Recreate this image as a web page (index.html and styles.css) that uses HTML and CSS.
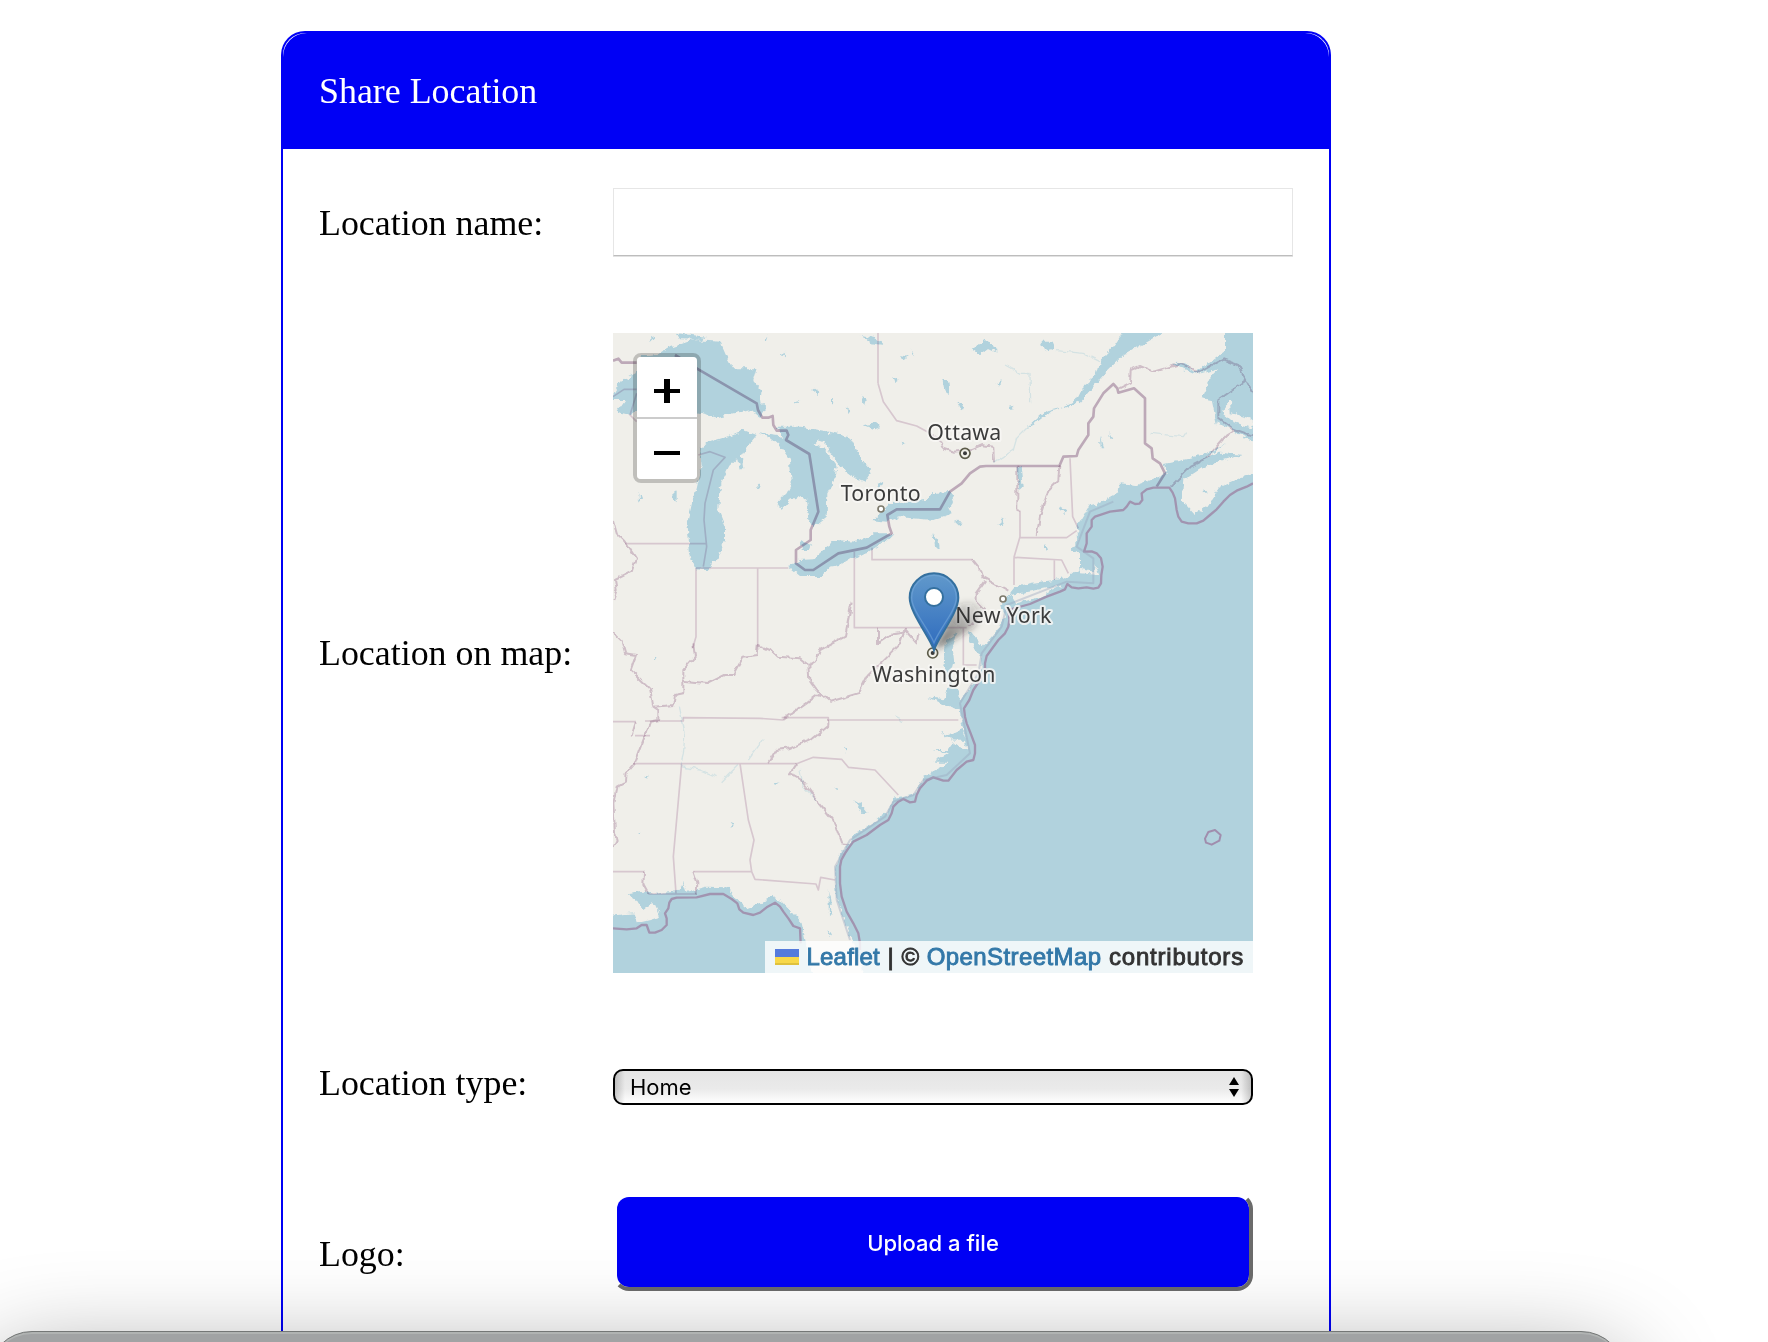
FILE: index.html
```
<!DOCTYPE html>
<html lang="en">
<head>
<meta charset="utf-8">
<title>Share Location</title>
<link rel="stylesheet" href="styles.css">
</head>
<body>
<main class="card">
  <header class="card-header">Share Location</header>
  <form class="fields">
    <label class="label" for="name">Location name:</label>
    <input class="name-input" id="name" type="text">

    <span class="label label-map">Location on map:</span>
    <div class="map">
      <svg class="map-canvas" viewBox="39 39 1920 1920">
        <defs>
          <linearGradient id="pin" x1="0" y1="0" x2="0" y2="1"><stop offset="0" stop-color="#6199cb"/><stop offset="1" stop-color="#2e6bbe"/></linearGradient>
          <linearGradient id="shade" gradientUnits="userSpaceOnUse" x1="1010" y1="985" x2="1150" y2="830"><stop offset="0" stop-color="#222" stop-opacity=".65"/><stop offset="1" stop-color="#222" stop-opacity="0"/></linearGradient>
          <filter id="rough" x="0" y="0" width="1" height="1"><feTurbulence type="fractalNoise" baseFrequency="0.05" numOctaves="3" seed="4"/><feDisplacementMap in="SourceGraphic" scale="20" xChannelSelector="R" yChannelSelector="G"/></filter>
          <filter id="wiggle" x="-.1" y="-.1" width="1.2" height="1.2"><feTurbulence type="fractalNoise" baseFrequency="0.04" numOctaves="2" seed="7"/><feDisplacementMap in="SourceGraphic" scale="16" xChannelSelector="R" yChannelSelector="G"/></filter>
          <filter id="soft" x="-.5" y="-.5" width="2" height="2"><feGaussianBlur stdDeviation="10"/></filter>
        </defs>
        <rect x="0" y="0" width="2000" height="2000" fill="#f0efea"/>
        <g fill="#b1d2dd" filter="url(#rough)">
          <!-- Gulf of St Lawrence and river -->
          <path d="M1980 20H1875V95L1840 120 1790 155 1750 130 1715 128 1790 163 1850 145 1830 180 1805 235 1835 240 1850 310 1890 325 1905 335 1980 375Z"/>
          <path d="M1580 20H1720L1640 65 1570 105 1515 160 1480 200 1440 245 1400 262 1350 275 1300 315 1280 325 1335 275 1390 262 1430 240 1450 200 1490 165 1500 125 1540 80Z"/>
          <!-- Atlantic -->
          <path d="M1875 375L1830 395 1790 412 1692 432 1700 462 1650 480 1610 495 1560 490 1555 520 1500 550 1470 558 1445 600 1430 620 1435 660 1415 690 1440 700 1440 740 1410 765 1380 778 1300 788 1245 800 1225 825 1200 855 1215 890 1195 930 1150 982 1105 930 1105 950 1125 985 1142 1010 1145 1045 1115 1095 1080 1140 1078 1165 1085 1210 1095 1260 1105 1300 1050 1320 1020 1345 970 1370 945 1420 880 1435 860 1480 770 1540 720 1600 705 1660 712 1740 740 1820 765 1880 800 1980H1980V455L1920 475 1860 500 1820 560 1785 585 1745 540 1750 480 1805 445 1850 425 1930 405 1860 398 1820 412 1860 385Z"/>
          <!-- Chesapeake and Carolina sounds -->
          <path d="M1038 960L1072 940 1058 985 1062 1020 1054 1050 1060 1100 1095 1130 1080 1170 1030 1152 985 1132 1030 1138 1048 1100 1030 1040Z"/>
          <path d="M1022 1235L1045 1248 1085 1230 1098 1260 1050 1258 1080 1285 1110 1290 1105 1325 1000 1325 1050 1300 1000 1290 1045 1290 1060 1268Z"/>
          <!-- Gulf of Mexico -->
          <path d="M20 1790L75 1782 135 1778 115 1745 80 1720 130 1712 160 1722 240 1712 252 1685 262 1715 320 1700 380 1702 412 1740 440 1765 480 1750 515 1730 545 1745 605 1810 618 1870 625 1930 650 1980H20Z"/>
          <!-- Lake Superior -->
          <path d="M170 105L205 85 235 75 280 60 360 65 380 110 400 145 470 145 460 180 485 210 480 250 498 265 480 292 455 270 400 280 345 292 290 280 110 270 90 285 50 275 75 240 30 240 60 185 110 160 120 110ZM230 40L320 50 310 60 240 58Z"/>
          <!-- Michigan -->
          <path d="M300 385L330 365 380 350 430 330 470 345 450 370 425 410 430 445 420 455 412 415 385 440 370 470 358 510 355 570 375 620 375 660 350 720 325 748 285 745 270 700 262 610 290 490 305 440Z"/>
          <!-- Huron -->
          <path d="M475 340L550 350 530 320 600 320 710 340 750 350 785 420 815 455 795 485 760 470 720 440 690 400 680 370 650 360 640 370 670 385 710 440 700 490 682 520 680 590 640 622 628 600 620 540 600 525 570 540 545 570 532 550 560 520 575 490 570 420 545 385 510 355Z"/>
          <!-- Erie and Ontario -->
          <path d="M605 660L635 675 630 690 605 690ZM565 740L600 720 640 718 680 680 710 660 765 665 820 640 880 640 860 660 800 700 760 710 720 735 690 740 660 768 600 768Z"/>
          <path d="M815 600L840 580 870 550 980 540 995 520 1050 515 1065 530 1045 560 1055 580 1000 600 900 592 860 605Z"/>
        </g>
        <g fill="#f0efea" filter="url(#rough)">
          <path d="M1865 275L1890 240 1892 280 1950 295 1970 310 1950 322 1900 305Z"/>
          <path d="M1230 825L1300 812 1390 795 1320 830 1250 850ZM1430 745L1480 755 1485 735 1495 765 1440 760Z"/>
          <path d="M1100 1075L1118 1058 1100 1110 1080 1140 1075 1120ZM160 1745L180 1790 150 1800 110 1810 100 1780 130 1770Z"/>
        </g>
        <g fill="#b1d2dd" filter="url(#rough)">
          <path d="M1322 65l35 0 8 20-20 12-18-12zM1115 90l35-30 25 8 15 30-25-12-25 20zM785 45l45 10 20 20-35-5zM1030 180l15 0 5 45-12-8zM1075 250l20 10-12 8zM880 170l16 8-10 8zM640 205l18 12-10 12zM790 315l45-5 5 12-20 6zM1500 350l10 35-8 0zM1250 440l12 0 6 60-10 10zM1380 560l18 12-6 8zM1065 600l25 6-8 10zM220 515l10 0 0 35-8 -8zM115 515l8 20-6 10zM830 485l20 8-15 10zM470 490l12 10-6 8zM1810 508l14 8-12 6zM150 50l10 8-8 8zM1000 640l15 20 5 30-15-15zM785 220l15 20-5 18zM740 262l14 8-8 6z"/>
          <path d="M760 1440l25 15 16 22-18-2zM700 1405l16 4-8 4zM520 1395l15-12-5 15zM390 1508l12 5-6 8zM112 1540l10-6-4 12zM130 1372l20-8-12 12zM685 1710l6 30 4 45-8 10zM682 1830l10 15-6 4zM732 1280l8 6-4 12zM165 1005l6 12-6 2z"/>
          <path d="M490 65l12-22-4 24zM540 105l22-12-14 14zM585 248l14-6-10 10zM693 235l8 10-8 12zM900 105l24 6-14 8zM932 90l14 20-8 -4zM1190 190l15-10-8 20zM1225 262l16-5-8 10zM1335 675l6 10-6 8zM1195 610l22-18-12 20zM1530 335l10 20-6-2zM905 365l12 4-8 6z"/>
        </g>
        <g fill="none" stroke="#c3dbe0" stroke-width="4" opacity=".6" filter="url(#wiggle)">
          <path d="M1370 92L1450 100 1500 125M1280 325L1250 355 1240 390 1180 430M1215 135L1260 160 1290 160 1292 250M1655 340L1750 350 1760 335"/>
          <path d="M238 1160L255 1240 250 1300 240 1340 300 1350 350 1370M365 1385L415 1335M445 1320L490 1258M600 1350L610 1400 650 1440M880 1190L910 1205"/>
        </g>
        <!-- State and province borders -->
        <g class="border" stroke="#e5d5e2" stroke-width="5">
          <path d="M834 39V190M75 671H320M288 744H565M288 744V950L278 985M473 744V990M763 695V923H990M816 683V719H1118M39 1205H108M105 1247H150M135 1203H250V1193L480 1195 550 1200M545 1193H685V1200H1075M100 1331H590M245 1331L220 1610 228 1720M420 1331L445 1500 462 1560 450 1620 455 1655 465 1678 648 1692 655 1710 662 1672 705 1680M39 1655H132M280 1655H455M145 1722H290M1260 653H1400L1430 632M1410 415L1418 590 1435 625M1242 712L1385 720 1405 760M1363 720V780M1242 712V795M1260 572V650L1242 712M1090 923V1035H1130M990 923H1100"/>
          <path d="M834 190L850 245 890 302 950 318 990 340M39 230L72 208H110M110 220L90 285 110 305M295 405L330 395 375 412 340 450 315 550 312 600 320 680 310 740"/>
          <path d="M590 1331L640 1312 725 1318 745 1342 825 1350 895 1425"/>
        </g>
        <g class="border" stroke="#dccbd9" stroke-width="6" filter="url(#wiggle)">
          <path d="M39 600L50 640 75 665 108 715 95 755 45 780 50 810 40 840M39 940L65 965 75 1000 108 1005 92 1050 150 1105 160 1160 175 1170 175 1200 150 1205 135 1250 105 1330 80 1360 78 1385 50 1400 40 1450 45 1540 50 1560 39 1580M160 1160L220 1155 225 1125 250 1120 250 1050 285 1010 280 970M250 1085L320 1092 375 1065 400 1065 430 1010 470 1005 473 975 510 990 530 1010 600 1015 625 1035 650 1020 660 990 735 950 755 845M625 1035L628 1080 660 1120 690 1145 775 1120 800 1070 840 1030 900 970 915 925M660 1120L620 1150 550 1200M685 1200V1218L640 1255 570 1285 530 1290 505 1330M590 1331L570 1360 605 1380 650 1440 700 1500 725 1570 745 1572M132 1655L130 1695 145 1722M280 1655L292 1690 290 1725M108 1205L95 1247"/>
          <path d="M834 923V970L880 940 905 935 915 930 950 970 955 940M990 340L1025 365 1030 385 1060 395 1110 390 1145 375 1180 380 1182 430M1252 440V570L1260 572M1378 438L1375 480 1345 510 1320 590 1310 648M1118 719L1135 740 1145 770 1225 815M1155 785L1130 820 1130 845 1155 870 1105 920M1560 205L1590 190 1592 150 1620 138 1660 155 1740 132 1800 155 1870 118 1915 135 1959 220M1940 180L1855 240 1855 295 1900 330 1959 350M1905 330L1880 345 1820 415 1770 440 1712 500"/>
        </g>
        <g class="border" stroke="#c9b5c9" stroke-width="8">
          <path d="M39 122L55 116 65 128H110M225 105L295 148 470 250 474 270 487 293 505 293 518 288 520 315 530 332 560 332 565 345 558 360 628 402 655 575 632 630V660L588 690V730L615 750H640L715 700 800 683 875 640 868 620 862 585 890 568H1020L1050 515 1085 490 1110 460 1140 440 1158 438H1378L1390 410 1430 408 1435 390 1465 345V310L1480 290 1482 265 1510 220 1540 192 1552 205 1555 218 1602 205 1635 235V370L1655 385 1658 415 1680 430 1695 460 1670 500"/>
        </g>
        <!-- Maritime limit, with a lighter inner line -->
        <g fill="none" stroke="#98a4bd" stroke-width="6" stroke-linejoin="round">
          <path class="limit" d="M1959 490L1940 500 1910 512 1890 525 1870 545 1850 568 1830 585 1810 602 1790 610 1765 610 1745 605 1735 590 1730 570 1725 535 1718 518 1708 503H1660L1640 508 1625 520 1627 540 1618 551 1605 552 1590 545 1580 560 1570 570 1530 575 1485 590 1475 600 1475 620 1460 640 1460 670 1452 695 1475 694 1490 700 1503 715 1508 740 1504 765 1503 790 1495 803 1480 806 1460 802 1435 805 1415 802 1402 792 1395 808 1380 815 1340 830 1290 852 1225 870 1228 900 1225 920 1215 940 1195 960 1160 1008 1155 1030 1155 1055 1140 1080 1120 1110 1108 1140 1092 1165 1095 1190 1100 1210 1112 1240 1125 1275 1125 1300 1120 1320 1100 1325 1070 1350 1045 1382 1030 1382 1000 1372 980 1382 960 1405 950 1425 945 1445 930 1447 910 1437 895 1445 880 1460 875 1480 865 1500 840 1515 800 1545 760 1565 745 1585 735 1600 724 1620 720 1640 720 1690 725 1730 740 1775 760 1810 775 1840 780 1870V1890"/>
          <path class="limit" d="M39 1825L80 1828 110 1825 125 1815 140 1815 148 1838 165 1838 185 1830 200 1815 200 1795 195 1780 205 1765 208 1748 215 1737 230 1733 290 1732 330 1722H370L395 1737 412 1750 418 1768 430 1778 460 1785 480 1778 500 1762 525 1748 540 1760 550 1775 565 1795 580 1818 600 1825 602 1870"/>
          <path opacity=".4" d="M1540 545L1470 575 1445 640 1430 680 1480 715 1480 790 1400 785 1220 855 1205 920 1145 1000 1135 1060 1080 1150 1110 1300 1040 1365 970 1380 940 1425 880 1445 855 1490 750 1560 705 1640 710 1740 750 1860"/>
          <path stroke="#a08dad" d="M1815 1556L1825 1536 1845 1530 1862 1545 1858 1562 1835 1574 1818 1568Z"/>
        </g>
        <g class="place">
          <g fill="#fff" stroke="#7d7a6c" stroke-width="5"><circle cx="843" cy="567" r="9"/><circle cx="1209" cy="837" r="9"/></g>
          <g fill="#f3f2ea" stroke="#5c5b49" stroke-width="5"><circle cx="1095" cy="400" r="15"/><circle cx="998" cy="999" r="15"/></g>
          <circle cx="1095" cy="400" r="6"/><circle cx="998" cy="999" r="6"/>
          <text x="722" y="542" textLength="240">Toronto</text>
          <text x="982" y="361" textLength="222">Ottawa</text>
          <text x="1066" y="909" textLength="288">New York</text>
          <text x="816" y="1086" textLength="370">Washington</text>
        </g>
        <path d="M1005 990L1050 880Q1085 835 1130 850 1165 875 1120 925Z" fill="url(#shade)" filter="url(#soft)"/>
        <path d="M1002 990C990 952 929 878 929 833a73 73 0 0 1 146 0C1075 878 1014 952 1002 990Z" fill="url(#pin)" stroke="#34709f" stroke-width="6"/>
        <path d="M1002 968C985 925 935 870 935 833a67 67 0 0 1 134 0C1069 870 1019 925 1002 968Z" fill="none" stroke="#74a8d8" stroke-width="4" opacity=".6"/>
        <circle cx="1002" cy="831" r="27" fill="#fff" stroke="#34709f" stroke-width="6"/>
      </svg>
      <div class="zoom">
        <button class="zoom-btn" type="button"><svg viewBox="0 0 60 60"><path d="M17 34H43"/><path class="upright" d="M30 22V46"/></svg></button>
        <button class="zoom-btn" type="button"><svg viewBox="0 0 60 60"><path d="M17 34H43"/></svg></button>
      </div>
      <div class="attribution"><span class="flag"></span><a>Leaflet</a><span>|</span><span>©</span><a class="osm">OpenStreetMap</a><span class="contributors">contributors</span></div>
    </div>

    <span class="label label-type">Location type:</span>
    <div class="select">Home<svg class="arrows" viewBox="0 0 10 20"><path d="M0 8L5 0 10 8ZM0 12L5 20 10 12Z"/></svg></div>

    <span class="label label-logo">Logo:</span>
    <button class="upload" type="button">Upload a file</button>
  </form>
</main>
<div class="overlay"><div class="window-edge"></div></div>
</body>
</html>
```
FILE: styles.css
```
html, body { height: 100%; }
body {
  display: flow-root;
  margin: 0;
  overflow: hidden;
  position: relative;
  background: #fff;
  font-family: "Liberation Serif", "Times New Roman", serif;
  font-size: 35.9px;
  color: #000;
}
.card {
  box-sizing: border-box;
  width: 1050px;
  height: 1311px;
  margin: 31px 0 0 281px;
  border: 2px solid #0000f5;
  border-bottom: 0;
  border-radius: 24px 24px 0 0;
}
.card-header {
  box-sizing: border-box;
  height: 116px;
  padding: 0 36px 1px;
  display: flex;
  align-items: center;
  background: #0000f5;
  color: #fff;
  border-radius: 24px 24px 0 0;
}
.fields {
  display: grid;
  grid-template-columns: 294px 680px;
  grid-template-rows: 145px 736px 124px 98px;
  padding: 39px 36px 0;
}
.label { line-height: 42px; white-space: nowrap; padding-top: 14px; }
.label-map { padding-top: 299px; }
.label-type { padding-top: 0; margin-top: -7px; }
.label-logo { padding-top: 40px; }
.name-input {
  box-sizing: border-box;
  width: 680px;
  height: 68px;
  border: 1px solid #e6e6e6;
  border-bottom-color: #bdbdbd;
  box-shadow: 0 1px 0 #e2e2e2;
  background: transparent;
  padding: 0 12px;
  font: 28px "Liberation Serif", serif;
}
.map { position: relative; width: 640px; height: 640px; overflow: hidden; }
.map-canvas { display: block; width: 640px; height: 640px; }
.border { fill: none; stroke-linejoin: round; mix-blend-mode: multiply; }
.limit { stroke: #a194b0; stroke-width: 7px; }
.place { font-family: "Noto Sans", sans-serif; font-size: 64px; fill: #3b3b3b; }
.place text { paint-order: stroke; stroke: #f8f7f4; stroke-opacity: .85; stroke-width: 12px; stroke-linejoin: round; }
.zoom {
  position: absolute;
  left: 20px;
  top: 20px;
  border: 4px solid rgba(0, 0, 0, .2);
  border-radius: 8px;
  background-clip: padding-box;
}
.zoom-btn { display: block; box-sizing: border-box; width: 60px; height: 60px; padding: 0; border: 0; background: #fff; border-radius: 0 0 4px 4px; }
.zoom-btn:first-child { height: 62px; border-bottom: 2px solid #ccc; border-radius: 4px 4px 0 0; }
.zoom-btn svg { display: block; width: 60px; height: 60px; fill: none; stroke: #000; stroke-width: 4px; }
.zoom-btn .upright { stroke-width: 6px; }
.attribution {
  position: absolute;
  right: 0;
  bottom: 0;
  box-sizing: border-box;
  width: 488px;
  height: 32px;
  padding: 0 10px;
  display: flex;
  align-items: center;
  justify-content: space-between;
  background: rgba(255, 255, 255, .8);
  font: 24px/32px "Liberation Sans", Arial, sans-serif;
  letter-spacing: .2px;
  color: #333;
  -webkit-text-stroke: .9px currentColor;
}
.attribution a { color: #3378a8; }
.attribution .osm { letter-spacing: .4px; }
.attribution .contributors { letter-spacing: .8px; margin-right: -1px; }
.flag { width: 24px; height: 16px; background: linear-gradient(#557bdc 50%, #f8d849 50% 88%, #dfc13d 88%); }
.select {
  box-sizing: border-box;
  width: 640px;
  height: 36px;
  border: 2px solid #000;
  border-radius: 10px;
  padding: 0 12px 0 15px;
  display: flex;
  align-items: center;
  justify-content: space-between;
  background: linear-gradient(90deg, rgba(0, 0, 0, .18), transparent 10px calc(100% - 10px), rgba(0, 0, 0, .18)), linear-gradient(#e5e5e5, #eaeaea 55%, #fff);
  font: 22px/30px Inter, sans-serif;
}
.arrows { width: 10px; height: 20px; }
.upload {
  box-sizing: border-box;
  width: 640px;
  height: 98px;
  padding: 2px 0 0;
  border: 4px solid;
  border-color: transparent #6b6b6b #6b6b6b transparent;
  border-radius: 16px;
  background: #0000f5;
  background-clip: padding-box;
  color: #fff;
  font: 500 22px Inter, sans-serif;
}
/* Top edge of the window that overlaps the page */
.overlay { position: absolute; inset: 0; overflow: hidden; pointer-events: none; }
.window-edge {
  position: absolute;
  left: -12px;
  top: 1331px;
  box-sizing: border-box;
  width: 1637px;
  height: 900px;
  border: 1px solid #747776;
  border-radius: 44px;
  background: #a1a3a4;
  box-shadow: inset 0 2px 0 #b0b3b2, 0 30px 100px rgba(0, 0, 0, .42);
}
```
